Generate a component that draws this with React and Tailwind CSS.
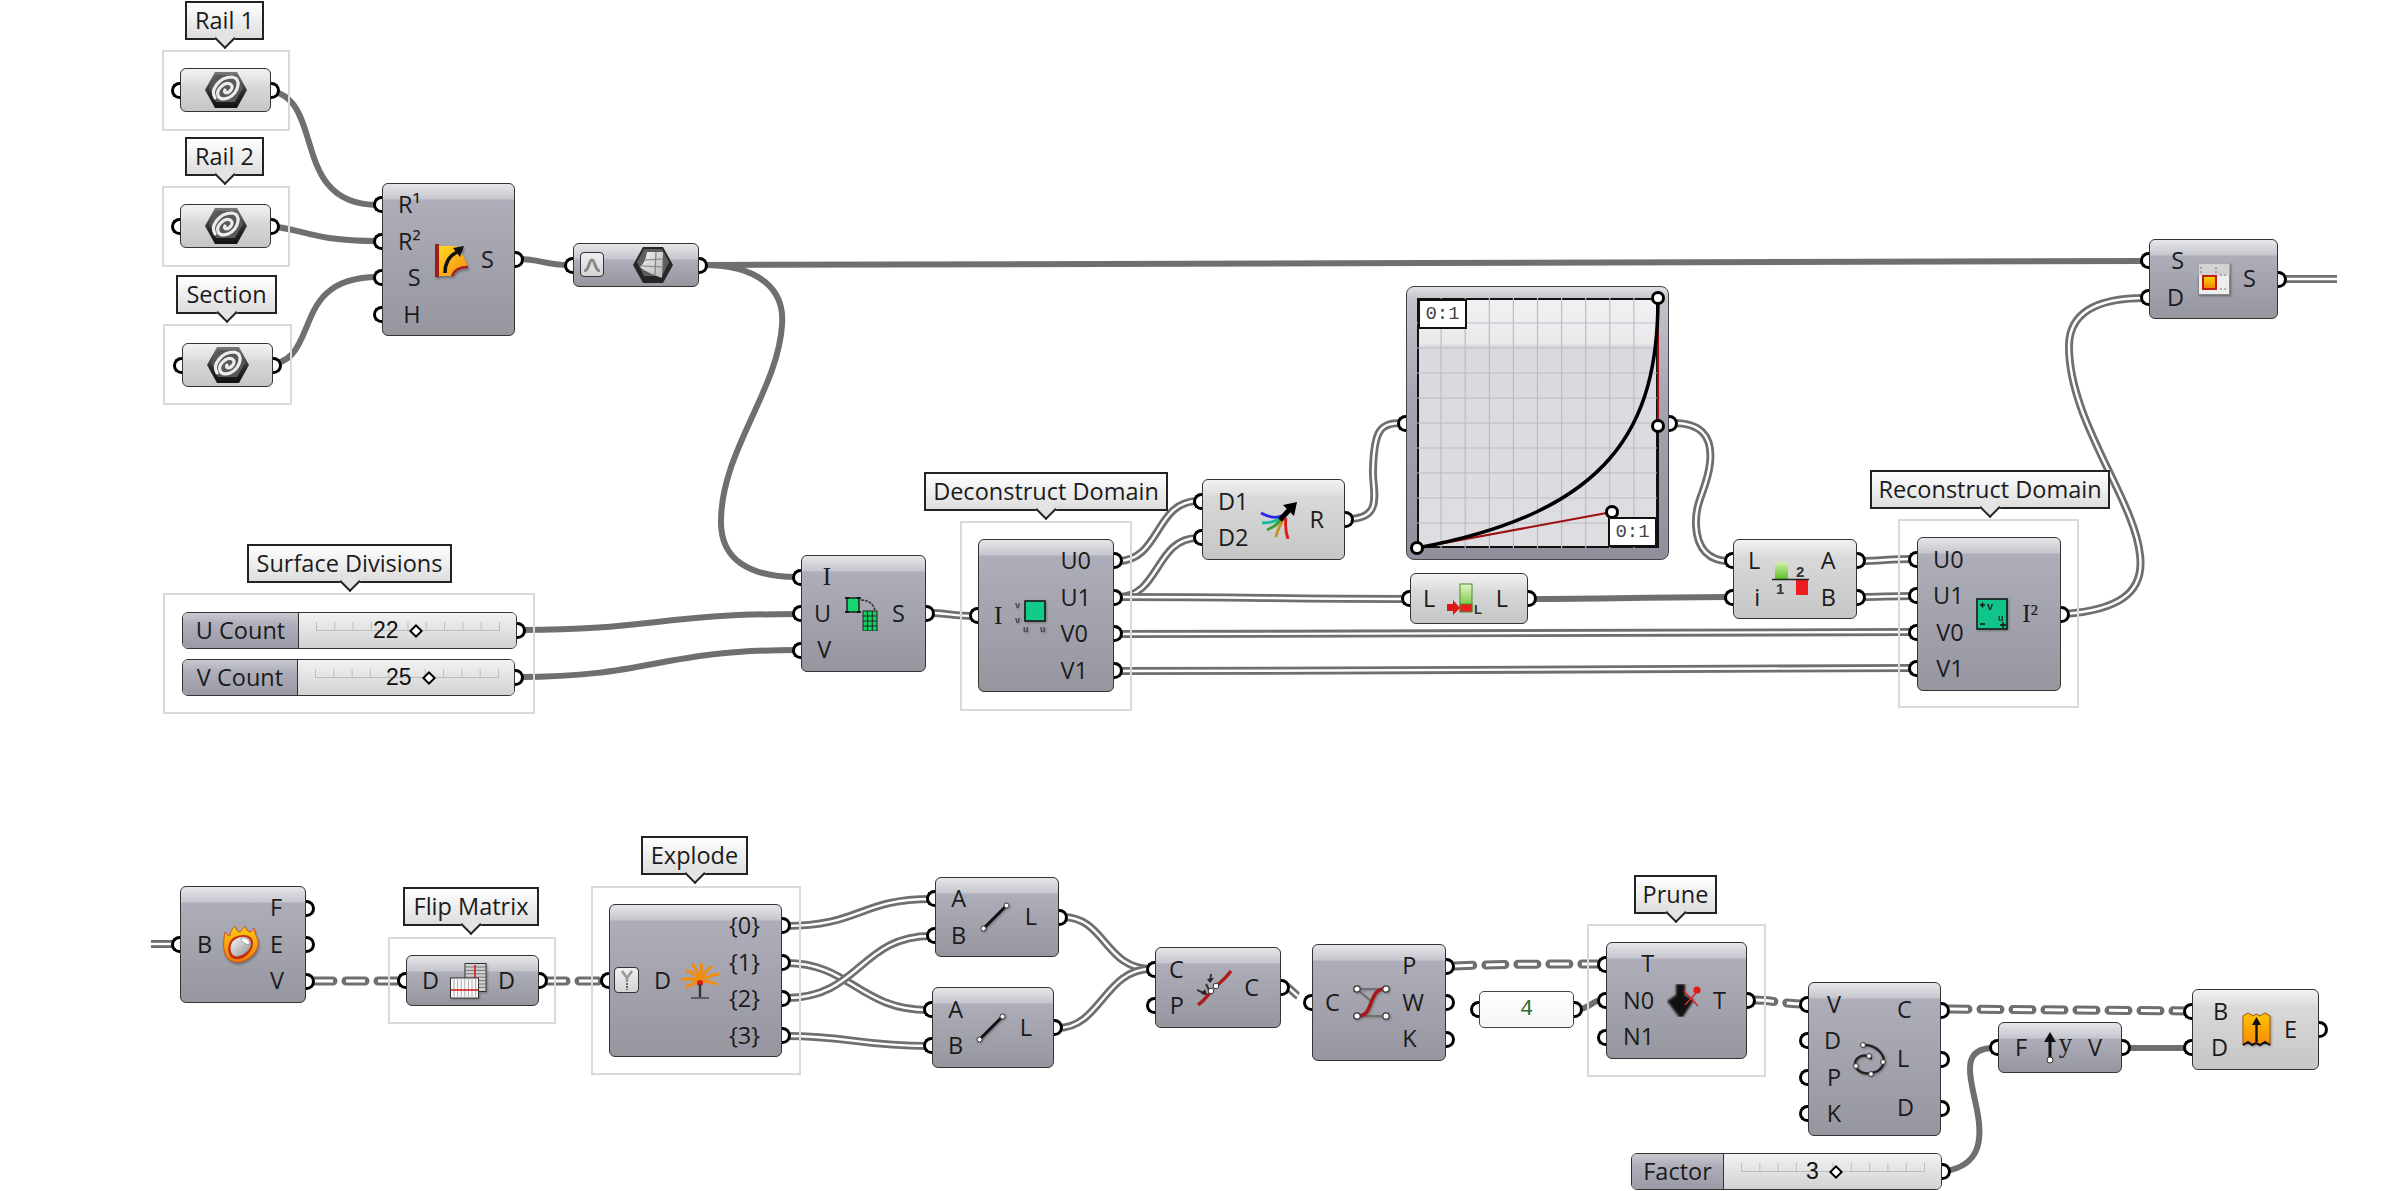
import React from "react";

const DARK = "bg-[linear-gradient(#e6e6ea_0px,#c6c6ce_15px,#aeaeba_16px,#96969f_100%)]";
const LIGHT = "bg-[linear-gradient(#f2f2f2_0px,#dedede_15px,#d9d9d9_16px,#c6c6c6_100%)]";

const singleWires = [
  "M262 90 C330 90 285 205 378 205",
  "M262 226 C300 226 305 241 378 241",
  "M264 365 C325 365 285 277 378 277",
  "M519 259 C540 259 545 265 569 265",
  "M703 265 C1000 265 1850 261 2145 261",
  "M703 265 C760 265 785 290 782 325 C778 390 722 450 721 520 C720 560 750 577 797 577",
  "M521 630 C650 630 660 614 797 614",
  "M519 677 C650 677 660 650 797 650",
  "M1531 599 C1600 599 1660 597 1729 597",
  "M1578 1009 C1590 1009 1592 1000 1602 1000",
  "M1946 1171 C1980 1165 1983 1140 1977 1110 C1970 1075 1960 1048 1994 1048",
  "M2126 1048 L2188 1048",
];

const treeWires = [
  "M930 613 C945 613 955 616 974 616",
  "M1118 561 C1160 561 1155 501 1198 501",
  "M1118 597 C1160 597 1155 538 1198 538",
  "M1118 597 C1250 597 1280 599 1406 599",
  "M1118 634 C1400 634 1700 632 1913 632",
  "M1118 671 C1400 671 1700 668 1913 668",
  "M1861 561 C1880 561 1890 559 1913 559",
  "M1861 597 C1880 597 1890 596 1913 596",
  "M1348 519 C1385 519 1372 490 1373 470 C1374 430 1380 423 1402 423",
  "M1673 423 C1700 423 1713 435 1710 463 C1707 490 1695 500 1696 525 C1697 550 1710 561 1729 561",
  "M2065 614 C2115 610 2145 595 2140 555 C2135 500 2068 420 2069 345 C2070 305 2110 298 2145 298",
  "M2282 279 L2337 279",
  "M151 944 L176 944",
  "M786 926 C860 926 860 899 931 899",
  "M786 963 C850 963 860 1010 928 1010",
  "M786 998 C860 998 860 936 931 936",
  "M786 1036 C850 1036 860 1046 928 1046",
  "M1063 917 C1105 917 1105 969 1151 969",
  "M1058 1028 C1100 1028 1105 969 1151 969",
  "M1285 985 C1292 990 1296 995 1298 996",
];

const dashWires = [
  "M314 981 L402 981",
  "M547 981 L605 981",
  "M1454 966 C1500 964 1550 964 1602 964",
  "M1755 1000 C1770 1000 1785 1004 1804 1004",
  "M1949 1009 L2188 1011",
];

const groups = [
  "left-[162px] top-[50px] w-[128px] h-[81px]",
  "left-[162px] top-[186px] w-[128px] h-[81px]",
  "left-[163px] top-[324px] w-[129px] h-[81px]",
  "left-[163px] top-[593px] w-[372px] h-[121px]",
  "left-[960px] top-[521px] w-[172px] h-[190px]",
  "left-[1898px] top-[519px] w-[181px] h-[189px]",
  "left-[388px] top-[937px] w-[168px] h-[87px]",
  "left-[591px] top-[886px] w-[210px] h-[189px]",
  "left-[1587px] top-[924px] w-[179px] h-[153px]",
];

const bubbles = [
  { text: "Rail 1", pos: "left-[185px] top-[1px] w-[79px]" },
  { text: "Rail 2", pos: "left-[185px] top-[137px] w-[79px]" },
  { text: "Section", pos: "left-[176px] top-[275px] w-[101px]" },
  { text: "Surface Divisions", pos: "left-[247px] top-[544px] w-[205px]" },
  { text: "Deconstruct Domain", pos: "left-[924px] top-[472px] w-[244px]" },
  { text: "Reconstruct Domain", pos: "left-[1870px] top-[470px] w-[240px]" },
  { text: "Flip Matrix", pos: "left-[403px] top-[887px] w-[136px]" },
  { text: "Explode", pos: "left-[641px] top-[836px] w-[107px]" },
  { text: "Prune", pos: "left-[1634px] top-[875px] w-[83px]" },
];

function HexCurve() {
  return (
    <svg width="44" height="38" viewBox="0 0 44 38">
      <defs>
        <linearGradient id="hexc" x1="0" y1="0" x2="0" y2="1">
          <stop offset="0" stopColor="#7a7a7a" />
          <stop offset="0.6" stopColor="#2a2a2a" />
          <stop offset="1" stopColor="#111" />
        </linearGradient>
      </defs>
      <polygon points="11,1 33,1 43,19 33,37 11,37 1,19" fill="url(#hexc)" />
      <polygon points="12,4 32,4 39,17 31,31 12,31 5,17" fill="#585858" />
      <path d="M11 27 C6 19 15 6 28 6 C38 7 35 22 24 27 C13 31 10 21 19 14 C26 10 31 15 26 20 C23 23 19 22 21 19" stroke="#ececec" strokeWidth="3.2" fill="none" strokeLinecap="round" />
    </svg>
  );
}

function HexSurface() {
  return (
    <svg width="42" height="38" viewBox="0 0 42 38">
      <defs>
        <linearGradient id="hexs" x1="0" y1="0" x2="1" y2="1">
          <stop offset="0" stopColor="#f4f4f4" />
          <stop offset="1" stopColor="#b4b4b4" />
        </linearGradient>
      </defs>
      <polygon points="11,1 31,1 41,19 31,37 11,37 1,19" fill="#262626" />
      <polygon points="12,3 30,3 37,16 30,30 12,30 5,16" fill="#5e5e5e" />
      <path d="M15 6 L31 6 L30 32 C22 29 14 26 8 21 C12 18 14 12 15 6Z" fill="url(#hexs)" />
      <path d="M24 6 L23 29 M13 14 L31 13 M10 20 L30 21" stroke="#808080" strokeWidth="1.2" />
    </svg>
  );
}

function SweepIcon() {
  return (
    <svg width="34" height="34" viewBox="0 0 34 34" className="drop-shadow-[1px_2px_1px_rgba(0,0,0,0.3)]">
      <defs>
        <linearGradient id="swp" x1="0" y1="0" x2="1" y2="1">
          <stop offset="0" stopColor="#ffd920" />
          <stop offset="1" stopColor="#f78a12" />
        </linearGradient>
      </defs>
      <path d="M5 3 L22 3 C28 10 32 17 34 24 C25 24 20 27 18 33 L5 33Z" fill="url(#swp)" />
      <path d="M34 24 C25 24 20 27 18 33" stroke="#a5201a" strokeWidth="2.5" fill="none" />
      <rect x="1" y="1" width="4" height="33" fill="#a01c1c" />
      <path d="M11 30 C11 20 15 13 23 9" stroke="#111" strokeWidth="3.5" fill="none" />
      <polygon points="19,5 30,3 26,14" fill="#111" />
    </svg>
  );
}

function DivideIcon() {
  return (
    <svg width="33" height="35" viewBox="0 0 33 35">
      <rect x="2" y="2" width="12" height="14" fill="#16d672" stroke="#222" strokeWidth="1.5" />
      <path d="M0 2 h4 M0 16 h4 M12 2 h4 M12 16 h4" stroke="#000" strokeWidth="1.5" />
      <path d="M16 4 C24 4 28 8 30 14" stroke="#333" strokeWidth="1.5" fill="none" strokeDasharray="3 1" />
      <rect x="18" y="15" width="14" height="20" fill="#0fd060" stroke="#222" />
      <path d="M22.6 15 V35 M27.3 15 V35 M18 20 H32 M18 25 H32 M18 30 H32" stroke="#222" strokeWidth="1" />
    </svg>
  );
}

function DomainIcon({ fill, letters }) {
  return (
    <svg width="33" height="34" viewBox="0 0 33 34" className="drop-shadow-[1px_1px_1px_rgba(0,0,0,0.3)]">
      <rect x={letters === "in" ? 1 : 10} y="2" width={letters === "in" ? 30 : 20} height={letters === "in" ? 30 : 20} fill={fill} stroke="#111" strokeWidth="1.5" />
      {letters === "in" ? (
        <>
          <text x="11" y="13" fontSize="11" fontWeight="700" fill="#222" fontFamily="Liberation Sans">v</text>
          <text x="22" y="24" fontSize="9" fontWeight="700" fill="#222" fontFamily="Liberation Sans">u</text>
          <path d="M4 8 h5 M6.5 5.5 v5 M4 27 h5 M24 28 h6 M27 25 v6" stroke="#111" strokeWidth="1.4" />
        </>
      ) : (
        <>
          <text x="0" y="9" fontSize="9" fontWeight="700" fill="#444" fontFamily="Liberation Sans">v</text>
          <text x="0" y="24" fontSize="9" fontWeight="700" fill="#444" fontFamily="Liberation Sans">v</text>
          <text x="8" y="33" fontSize="9" fontWeight="700" fill="#444" fontFamily="Liberation Sans">u</text>
          <text x="25" y="33" fontSize="9" fontWeight="700" fill="#444" fontFamily="Liberation Sans">u</text>
        </>
      )}
    </svg>
  );
}

function FanIcon() {
  return (
    <svg width="38" height="38" viewBox="0 0 38 38">
      <path d="M1 12 C10 17 17 18 24 14" stroke="#2a2ae8" strokeWidth="2.8" fill="none" />
      <path d="M2 22 C10 22 17 21 23 15" stroke="#16b8a0" strokeWidth="2.8" fill="none" />
      <path d="M7 29 C13 26 19 23 23 16" stroke="#3aa030" strokeWidth="2.8" fill="none" />
      <path d="M16 36 C17 30 20 24 24 17" stroke="#c89020" strokeWidth="2.8" fill="none" />
      <path d="M28 38 C26 32 25 24 26 17" stroke="#e01818" strokeWidth="2.8" fill="none" />
      <path d="M20 19 L30 8" stroke="#000" strokeWidth="5" />
      <polygon points="23,4 37,1 34,15" fill="#000" />
    </svg>
  );
}

function ReverseIcon() {
  return (
    <svg width="37" height="32" viewBox="0 0 37 32">
      <defs>
        <linearGradient id="rvg" x1="0" y1="0" x2="0" y2="1">
          <stop offset="0" stopColor="#e4f4c8" />
          <stop offset="1" stopColor="#58c020" />
        </linearGradient>
      </defs>
      <rect x="13" y="1" width="12" height="27" fill="url(#rvg)" stroke="#4e8a34" />
      <rect x="13" y="21" width="12" height="8" fill="#ee1c1c" stroke="#4e8a34" />
      <polygon points="0,21 6,21 6,17 13,25 6,32 6,28 0,28" fill="#dd1616" />
      <text x="27" y="31" fontSize="13" fontWeight="700" fill="#333" fontFamily="Liberation Sans">L</text>
    </svg>
  );
}

function SplitIcon() {
  return (
    <svg width="37" height="34" viewBox="0 0 37 34">
      <defs>
        <linearGradient id="spg" x1="0" y1="0" x2="0" y2="1">
          <stop offset="0" stopColor="#d4eeb0" />
          <stop offset="1" stopColor="#5cc020" />
        </linearGradient>
      </defs>
      <rect x="3" y="0" width="13" height="17" fill="url(#spg)" />
      <rect x="24" y="18" width="12" height="15" fill="#ee1c1c" />
      <path d="M0 17.5 H37" stroke="#222" strokeWidth="1.6" />
      <text x="24" y="15" fontSize="15" fontWeight="700" fill="#333" fontFamily="Liberation Sans">2</text>
      <text x="4" y="32" fontSize="15" fontWeight="700" fill="#333" fontFamily="Liberation Sans">1</text>
    </svg>
  );
}

function SurfaceSplitIcon() {
  return (
    <svg width="32" height="32" viewBox="0 0 32 32" className="drop-shadow-[1px_1px_1px_rgba(0,0,0,0.4)]">
      <defs>
        <linearGradient id="sdo" x1="0" y1="0" x2="0" y2="1">
          <stop offset="0" stopColor="#ffd800" />
          <stop offset="1" stopColor="#f27a10" />
        </linearGradient>
      </defs>
      <rect x="0.5" y="0.5" width="31" height="31" fill="#eeeeee" stroke="#888" />
      <rect x="0.5" y="0.5" width="31" height="12" fill="#d2d2d2" />
      <rect x="5" y="13" width="13" height="13" fill="url(#sdo)" stroke="#c01c10" strokeWidth="2" />
      <path d="M3 4 v7 M18 4 v7 M22 12 h8 M22 26 h8" stroke="#777" strokeWidth="1" strokeDasharray="2 2" />
    </svg>
  );
}

function FireIcon() {
  return (
    <svg width="36" height="37" viewBox="0 0 36 37" className="drop-shadow-[1px_2px_1px_rgba(0,0,0,0.3)]">
      <defs>
        <linearGradient id="flame" x1="0" y1="0" x2="0" y2="1">
          <stop offset="0" stopColor="#ffce10" />
          <stop offset="1" stopColor="#ef7a0c" />
        </linearGradient>
        <linearGradient id="brep" x1="0" y1="0" x2="1" y2="1">
          <stop offset="0" stopColor="#fafafa" />
          <stop offset="1" stopColor="#8e8e8e" />
        </linearGradient>
      </defs>
      <path d="M3 30 C-1 22 1 13 2 6 C4 9 6 10 7 10 C7 6 9 3 12 0 C13 4 15 6 17 6 C19 4 20 2 22 0 C23 4 25 6 28 6 C29 5 30 3 31 2 C31 8 36 12 35 19 C34 27 27 33 18 36 C12 37 6 35 3 30Z" fill="url(#flame)" stroke="#d8400c" strokeWidth="0.8" />
      <path d="M7 30 C3 22 6 14 12 11 C18 8 26 8 29 13 C32 19 28 27 20 32 C15 34 10 34 7 30Z" fill="#c42c0c" />
      <path d="M9 28 C6 22 8 15 13 13 C18 10 24 10 27 14 C30 19 26 26 19 29 C15 31 11 31 9 28Z" fill="url(#brep)" />
      <path d="M18 12 C24 11 28 15 26 19 C22 18 18 16 18 12Z" fill="#fff" stroke="#8a8a8a" strokeWidth="0.8" />
    </svg>
  );
}

function FlipIcon() {
  const rows = [0, 1, 2, 3, 4, 5, 6];
  return (
    <svg width="37" height="36" viewBox="0 0 37 36" className="drop-shadow-[1px_1px_1px_rgba(0,0,0,0.3)]">
      <rect x="15" y="0.5" width="21" height="28" fill="#cfcfcf" stroke="#333" />
      {rows.map((r) => (
        <path key={r} d={`M15 ${4 + r * 3.4} H36`} stroke="#777" strokeWidth="1" />
      ))}
      <path d="M25 2 V15" stroke="#d81c1c" strokeWidth="1.6" />
      <rect x="0.5" y="15" width="28" height="20" fill="#fafafa" stroke="#333" />
      {rows.map((r) => (
        <path key={r} d={`M${4 + r * 3.6} 15 V35`} stroke="#aaa" strokeWidth="1" />
      ))}
      <path d="M1 27 H28" stroke="#d81c1c" strokeWidth="1.6" />
    </svg>
  );
}

function TreeIcon() {
  return (
    <svg width="38" height="36" viewBox="0 0 38 36">
      <g stroke="#f08c10" strokeWidth="3.2" fill="none" strokeLinecap="round">
        <path d="M19 19 C16 13 12 9 6 8" />
        <path d="M19 19 C18 12 16 7 12 2" />
        <path d="M19 19 C20 12 21 6 20 0" />
        <path d="M19 19 C22 13 25 7 30 4" />
        <path d="M19 19 C24 15 30 12 37 11" />
        <path d="M19 19 C14 16 7 15 0 17" />
        <path d="M19 19 C25 18 30 18 35 21" />
        <path d="M19 19 C15 20 10 21 6 24" />
      </g>
      <circle cx="19" cy="20" r="3" fill="#d81c1c" />
      <path d="M19 21 V34" stroke="#333" strokeWidth="2.4" />
      <path d="M10 35 H28" stroke="#555" strokeWidth="1.8" />
    </svg>
  );
}

function LineIcon() {
  return (
    <svg width="30" height="30" viewBox="0 0 30 30" className="drop-shadow-[1px_1px_1px_rgba(0,0,0,0.3)]">
      <path d="M3 27 L27 3" stroke="#111" strokeWidth="3" />
      <circle cx="3.5" cy="26.5" r="2.5" fill="#fff" stroke="#333" />
      <circle cx="26.5" cy="3.5" r="2.5" fill="#fff" stroke="#333" />
    </svg>
  );
}

function ShatterIcon() {
  return (
    <svg width="35" height="36" viewBox="0 0 35 36">
      <path d="M1 35 C8 30 10 26 14 22 M18 17 C24 12 29 8 34 1" stroke="#b01c1c" strokeWidth="3.4" fill="none" />
      <path d="M0 20 L9 24 M9 14 L12 20 M14 4 L13 12" stroke="#333" strokeWidth="2" />
      <polygon points="10,25 4,24 8,19" fill="#222" />
      <polygon points="13,13 10,9 17,8" fill="#222" />
      <circle cx="19" cy="16" r="2.8" fill="#fff" stroke="#333" />
      <circle cx="14" cy="21" r="2.8" fill="#fff" stroke="#333" />
    </svg>
  );
}

function NurbsIcon() {
  return (
    <svg width="37" height="35" viewBox="0 0 37 35" className="drop-shadow-[1px_1px_1px_rgba(0,0,0,0.3)]">
      <path d="M4 4 H33 M4 31 H33 M4 4 L20 18" stroke="#666" strokeWidth="1.6" fill="none" />
      <path d="M5 31 C21 32 15 3 32 4" stroke="#a81818" strokeWidth="3.6" fill="none" />
      {[[4, 4], [33, 4], [4, 31], [33, 31]].map(([x, y]) => (
        <circle key={x + "-" + y} cx={x} cy={y} r="3.2" fill="#fff" stroke="#333" strokeWidth="1.2" />
      ))}
    </svg>
  );
}

function PruneIcon() {
  return (
    <svg width="34" height="33" viewBox="0 0 34 33">
      <path d="M9 0 H18 V11 L27 16 L16 33 H12 L0 17 L9 11Z" fill="#111" className="blur-[0.8px]" />
      <path d="M17 7 L31 22 M18 21 L29 9" stroke="#d82828" strokeWidth="1.6" />
      <circle cx="30" cy="6" r="3.6" fill="#e01818" />
    </svg>
  );
}

function SpiralIcon() {
  return (
    <svg width="34" height="35" viewBox="0 0 34 35" className="drop-shadow-[1px_1px_1px_rgba(0,0,0,0.3)]">
      <path d="M11 3 C24 2 35 14 31 23 C27 32 11 35 4 26 C0 18 8 12 16 14 C20 15 19 19 17 14" stroke="#222" strokeWidth="2.4" fill="none" />
      {[[11, 3], [31, 20], [19, 32], [4, 24], [17, 14]].map(([x, y]) => (
        <circle key={x} cx={x} cy={y} r="2.4" fill="#fff" stroke="#333" />
      ))}
    </svg>
  );
}

function VectorIcon() {
  return (
    <div className="flex items-start">
      <svg width="14" height="32" viewBox="0 0 14 32">
        <polygon points="7,0 13,10 1,10" fill="#111" />
        <path d="M7 8 V27" stroke="#111" strokeWidth="3" />
        <circle cx="7" cy="28" r="3" fill="#fff" stroke="#333" />
      </svg>
      <span className="ml-[2px] font-['Liberation_Serif'] text-[27px] leading-[22px] text-[#222]">y</span>
    </div>
  );
}

function ExtrudeIcon() {
  return (
    <svg width="29" height="35" viewBox="0 0 29 35" className="drop-shadow-[1px_1px_1px_rgba(0,0,0,0.3)]">
      <defs>
        <linearGradient id="ext" x1="0" y1="0" x2="0" y2="1">
          <stop offset="0" stopColor="#ffc400" />
          <stop offset="1" stopColor="#f58a0a" />
        </linearGradient>
      </defs>
      <path d="M1 4 L6 1 L11 4 L14 2 L18 4 L23 1 L28 4 V33 L23 30 L18 33 L14 31 L10 33 L6 30 L1 33Z" fill="url(#ext)" stroke="#a8580c" />
      <path d="M1 33 L6 30 L10 33 L14 31 L18 33 L23 30 L28 33" stroke="#111" strokeWidth="2" fill="none" />
      <path d="M14.5 10 V30" stroke="#111" strokeWidth="2.4" />
      <polygon points="14.5,5 19,13 10,13" fill="#111" />
    </svg>
  );
}

function ToggleBox({ children, pos }) {
  return (
    <div className={`absolute flex items-center justify-center rounded-[4px] border-[1.5px] border-[#333] bg-[linear-gradient(#f0f0f0,#d4d4d4)] ${pos}`}>
      {children}
    </div>
  );
}

function Grip({ side }) {
  if (side === "left") {
    return <div className="h-[17px] w-[9px] rounded-l-full border-[3.5px] border-r-0 border-black bg-white" />;
  }
  return <div className="h-[17px] w-[9px] rounded-r-full border-[3.5px] border-l-0 border-black bg-white" />;
}

// one grip each side, vertically centred on its owner
function SideGrips({ left = true, right = true }) {
  return (
    <>
      {left && <div className="absolute inset-y-0 -left-[10px] flex items-center"><Grip side="left" /></div>}
      {right && <div className="absolute inset-y-0 -right-[10px] flex items-center"><Grip side="right" /></div>}
    </>
  );
}

function Node({ pos, ins = [], outs = [], inRow = "h-[36.5px]", outRow = "h-[36.5px]", light, pad, icon, children }) {
  return (
    <div className={`absolute flex items-center rounded-[6px] border-[1.5px] border-[#333] text-[23.5px] text-[#1b1b1b] ${light ? LIGHT : DARK} ${pos} ${pad}`}>
      <div className="absolute inset-y-0 -left-[10px] flex flex-col justify-center">
        {ins.map((t, i) => (
          <div key={i} className={`flex items-center ${inRow}`}><Grip side="left" /></div>
        ))}
      </div>
      <div className="absolute inset-y-0 -right-[10px] flex flex-col justify-center">
        {outs.map((t, i) => (
          <div key={i} className={`flex items-center ${outRow}`}><Grip side="right" /></div>
        ))}
      </div>
      {children}
      <div className="flex flex-col items-end">
        {ins.map((t, i) => (
          <div key={i} className={`flex items-center ${inRow}`}>{t}</div>
        ))}
      </div>
      <div className="flex flex-1 items-center justify-center">{icon}</div>
      <div className="flex flex-col items-start">
        {outs.map((t, i) => (
          <div key={i} className={`flex items-center ${outRow}`}>{t}</div>
        ))}
      </div>
    </div>
  );
}

function Param({ pos }) {
  return (
    <div className={`absolute flex items-center justify-center rounded-[6px] border-[1.5px] border-[#333] ${LIGHT} ${pos}`}>
      <SideGrips />
      <HexCurve />
    </div>
  );
}

function Track() {
  const ticks = [0, 1, 2, 3, 4, 5, 6, 7, 8, 9, 10];
  return (
    <svg width="184" height="10" viewBox="0 0 184 10" className="absolute left-[17px] top-[9px]">
      <path d="M0 8.5 H184" stroke="#bdbdbd" strokeWidth="1" />
      {ticks.map((t) => (
        <path key={t} d={`M${0.5 + t * 18.3} 0 V9`} stroke="#bdbdbd" strokeWidth="1" />
      ))}
    </svg>
  );
}

function Slider({ pos, label, labelW, value, pad }) {
  return (
    <div className={`absolute flex rounded-[6px] border-[1.5px] border-[#333] ${pos}`}>
      <div className={`flex items-center justify-center rounded-l-[5px] border-r-[1.5px] border-[#333] text-[23.5px] text-[#1b1b1b] bg-[linear-gradient(#c8c8d0_0px,#aeaeba_12px,#9a9aa6_100%)] ${labelW}`}>
        {label}
      </div>
      <div className={`relative flex flex-1 items-center gap-[12px] rounded-r-[5px] bg-[linear-gradient(#f2f2f2,#d2d2d2)] ${pad}`}>
        <Track />
        <span className="relative font-['Liberation_Sans'] text-[23px] text-[#111]">{value}</span>
        <div className="relative h-[10px] w-[10px] rotate-45 border-[2.5px] border-black bg-white" />
      </div>
      <SideGrips left={false} />
    </div>
  );
}

function Bubble({ text, pos }) {
  return (
    <div className={`absolute flex h-[39px] items-center justify-center border-2 border-[#222] bg-[linear-gradient(#ffffff,#dddddd)] text-[23.5px] text-[#1b1b1b] ${pos}`}>
      {text}
      <div className="absolute left-1/2 top-[28px] h-[15px] w-[15px] -translate-x-1/2 rotate-45 border-b-2 border-r-2 border-[#222] bg-[#e4e4e4]" />
    </div>
  );
}

function GraphMapper() {
  const lines = [1, 2, 3, 4, 5, 6, 7, 8, 9];
  return (
    <div className="absolute left-[1406px] top-[286px] flex h-[274px] w-[263px] rounded-[8px] border-[1.5px] border-[#444] bg-[linear-gradient(#e0e0e4_0px,#c4c4cc_12px,#a6a6b2_40%,#90909c_100%)] pb-[11px] pl-[10px] pr-[10px] pt-[11px]">
      <SideGrips />
      <div className="relative h-full w-full border-2 border-[#111] bg-[linear-gradient(#f1f1f3_0px,#e9e9ec_44px,#d9d9df_46px,#dddde2_100%)]">
        <svg width="241" height="250" viewBox="0 0 241 250" className="absolute -left-[2px] -top-[2px] overflow-visible">
          {lines.map((n) => (
            <g key={n} stroke="#bcbcc3" strokeWidth="1.2">
              <path d={`M${n * 24.1} 0 V250`} />
              <path d={`M0 ${n * 25} H241`} />
            </g>
          ))}
          <path d="M0 250 L195 214 M241 0 V128" stroke="#9c1010" strokeWidth="2" />
          <path d="M241 128 V250" stroke="#111" strokeWidth="2" />
          <path d="M0 250 C195 214 241 128 241 0" stroke="#000" strokeWidth="3.5" fill="none" />
          {[[0, 250], [195, 214], [241, 128], [241, 0]].map(([x, y]) => (
            <circle key={x + "-" + y} cx={x} cy={y} r="5.5" fill="#fff" stroke="#000" strokeWidth="3" />
          ))}
        </svg>
        <div className="absolute left-[-1px] top-[-1px] flex h-[30px] w-[49px] items-center justify-center border-2 border-[#111] bg-white font-['Liberation_Mono'] text-[19px] text-[#444]">0:1</div>
        <div className="absolute bottom-[-1px] right-[-1px] flex h-[30px] w-[49px] items-center justify-center border-2 border-[#111] bg-white font-['Liberation_Mono'] text-[19px] text-[#444]">0:1</div>
      </div>
    </div>
  );
}

export default function App() {
  const iSerif = <span className="font-['Liberation_Serif'] text-[25px]">I</span>;
  return (
    <div className="relative h-[1191px] w-[2400px] overflow-hidden bg-white font-['Open_Sans',sans-serif]">
      <svg width="2400" height="1191" viewBox="0 0 2400 1191" className="absolute left-0 top-0" fill="none">
        {singleWires.map((d) => (
          <path key={d} d={d} stroke="#6f6f6f" strokeWidth="6" />
        ))}
        {treeWires.map((d) => (
          <g key={d}>
            <path d={d} stroke="#6f6f6f" strokeWidth="8" />
            <path d={d} stroke="#fff" strokeWidth="2.4" />
          </g>
        ))}
        {dashWires.map((d) => (
          <g key={d}>
            <path d={d} stroke="#6f6f6f" strokeWidth="9" strokeDasharray="19 13" strokeLinecap="round" />
            <path d={d} stroke="#fff" strokeWidth="3" strokeDasharray="19 13" />
          </g>
        ))}
      </svg>

      {groups.map((g) => (
        <div key={g} className={`absolute border-2 border-[#dadada] ${g}`} />
      ))}

      <Param pos="left-[180px] top-[68px] h-[44px] w-[91px]" />
      <Param pos="left-[180px] top-[204px] h-[44px] w-[91px]" />
      <Param pos="left-[182px] top-[343px] h-[44px] w-[91px]" />

      <Node pos="left-[382px] top-[183px] h-[153px] w-[133px]" pad="pl-[15px] pr-[20px]" ins={["R¹", "R²", "S", "H"]} outs={["S"]} icon={<SweepIcon />} />

      <div className={`absolute left-[573px] top-[243px] flex h-[44px] w-[126px] items-center rounded-[6px] border-[1.5px] border-[#333] ${DARK}`}>
        <SideGrips />
        <ToggleBox pos="left-[6px] top-[8px] h-[25px] w-[24px]">
          <svg width="18" height="14" viewBox="0 0 18 14"><path d="M1 13 C6 13 6 2 9 2 C12 2 12 13 17 13" stroke="#888" strokeWidth="3" fill="none" /></svg>
        </ToggleBox>
        <div className="ml-[58px]"><HexSurface /></div>
      </div>

      <Slider pos="left-[182px] top-[612px] h-[37px] w-[335px]" label="U Count" labelW="w-[116px]" value="22" pad="pl-[74px]" />
      <Slider pos="left-[182px] top-[659px] h-[37px] w-[333px]" label="V Count" labelW="w-[115px]" value="25" pad="pl-[88px]" />
      <Slider pos="left-[1631px] top-[1153px] h-[37px] w-[311px]" label="Factor" labelW="w-[92px]" value="3" pad="pl-[82px]" />

      <Node pos="left-[801px] top-[555px] h-[117px] w-[125px]" pad="pl-[12px] pr-[20px]" ins={[iSerif, "U", "V"]} outs={["S"]} icon={<DivideIcon />} />
      <Node pos="left-[978px] top-[539px] h-[153px] w-[136px]" pad="pl-[15px] pr-[22px]" ins={[iSerif]} outs={["U0", "U1", "V0", "V1"]} icon={<DomainIcon fill="#11cc88" letters="out" />} />
      <Node pos="left-[1202px] top-[479px] h-[81px] w-[143px]" light pad="pl-[15px] pr-[20px]" ins={["D1", "D2"]} outs={["R"]} icon={<FanIcon />} />
      <GraphMapper />
      <Node pos="left-[1410px] top-[573px] h-[51px] w-[118px]" light pad="pl-[12px] pr-[19px]" ins={["L"]} outs={["L"]} icon={<ReverseIcon />} />
      <Node pos="left-[1733px] top-[539px] h-[80px] w-[124px]" light pad="pl-[14px] pr-[20px]" ins={["L", "i"]} outs={["A", "B"]} icon={<SplitIcon />} />
      <Node pos="left-[1917px] top-[537px] h-[154px] w-[144px]" pad="pl-[15px] pr-[22px]" ins={["U0", "U1", "V0", "V1"]} outs={[<span key="i2" className="font-['Liberation_Serif'] text-[25px]">I²</span>]} icon={<DomainIcon fill="#11c48c" letters="in" />} />
      <Node pos="left-[2149px] top-[239px] h-[80px] w-[129px]" pad="pl-[17px] pr-[21px]" ins={["S", "D"]} outs={["S"]} icon={<SurfaceSplitIcon />} />

      <Node pos="left-[180px] top-[886px] h-[117px] w-[126px]" pad="pl-[16px] pr-[21px]" ins={["B"]} outs={["F", "E", "V"]} icon={<FireIcon />} />
      <Node pos="left-[406px] top-[955px] h-[51px] w-[133px]" pad="pl-[15px] pr-[23px]" ins={["D"]} outs={["D"]} icon={<FlipIcon />} />
      <Node pos="left-[609px] top-[904px] h-[153px] w-[173px]" pad="pl-[44px] pr-[21px]" ins={["D"]} outs={["{0}", "{1}", "{2}", "{3}"]} icon={<TreeIcon />}>
        <ToggleBox pos="left-[4px] top-[62px] h-[26px] w-[25px]">
          <svg width="14" height="20" viewBox="0 0 14 20"><path d="M2 1 L7 8 L12 1 M7 8 V12" stroke="#999" strokeWidth="2.6" fill="none" /><path d="M7 13 V20" stroke="#666" strokeWidth="2" strokeDasharray="2 1" /></svg>
        </ToggleBox>
      </Node>
      <Node pos="left-[935px] top-[877px] h-[80px] w-[124px]" pad="pl-[15px] pr-[21px]" ins={["A", "B"]} outs={["L"]} icon={<LineIcon />} />
      <Node pos="left-[932px] top-[987px] h-[81px] w-[122px]" pad="pl-[15px] pr-[21px]" ins={["A", "B"]} outs={["L"]} icon={<LineIcon />} />
      <Node pos="left-[1155px] top-[947px] h-[81px] w-[126px]" pad="pl-[13px] pr-[21px]" ins={["C", "P"]} outs={["C"]} icon={<ShatterIcon />} />
      <Node pos="left-[1312px] top-[944px] h-[117px] w-[134px]" pad="pl-[12px] pr-[21px]" ins={["C"]} outs={["P", "W", "K"]} icon={<NurbsIcon />} />

      <div className="absolute left-[1479px] top-[991px] flex h-[37px] w-[95px] items-center justify-center rounded-[5px] border-[1.5px] border-[#444] bg-[linear-gradient(#ffffff,#f6f6f6)] font-['Liberation_Mono'] text-[22px] text-[#2e6b2e]">
        <SideGrips />
        4
      </div>

      <Node pos="left-[1606px] top-[942px] h-[117px] w-[141px]" pad="pl-[16px] pr-[20px]" ins={["T", "N0", "N1"]} outs={["T"]} icon={<PruneIcon />} />
      <Node pos="left-[1808px] top-[982px] h-[154px] w-[133px]" pad="pl-[15px] pr-[26px]" ins={["V", "D", "P", "K"]} outs={["C", "L", "D"]} outRow="h-[49px]" icon={<SpiralIcon />} />
      <Node pos="left-[1998px] top-[1022px] h-[51px] w-[124px]" pad="pl-[16px] pr-[19px]" ins={["F"]} outs={["V"]} icon={<VectorIcon />} />
      <Node pos="left-[2192px] top-[989px] h-[81px] w-[127px]" light pad="pl-[18px] pr-[21px]" ins={["B", "D"]} outs={["E"]} icon={<ExtrudeIcon />} />

      {bubbles.map((b) => (
        <Bubble key={b.text} text={b.text} pos={b.pos} />
      ))}
    </div>
  );
}
